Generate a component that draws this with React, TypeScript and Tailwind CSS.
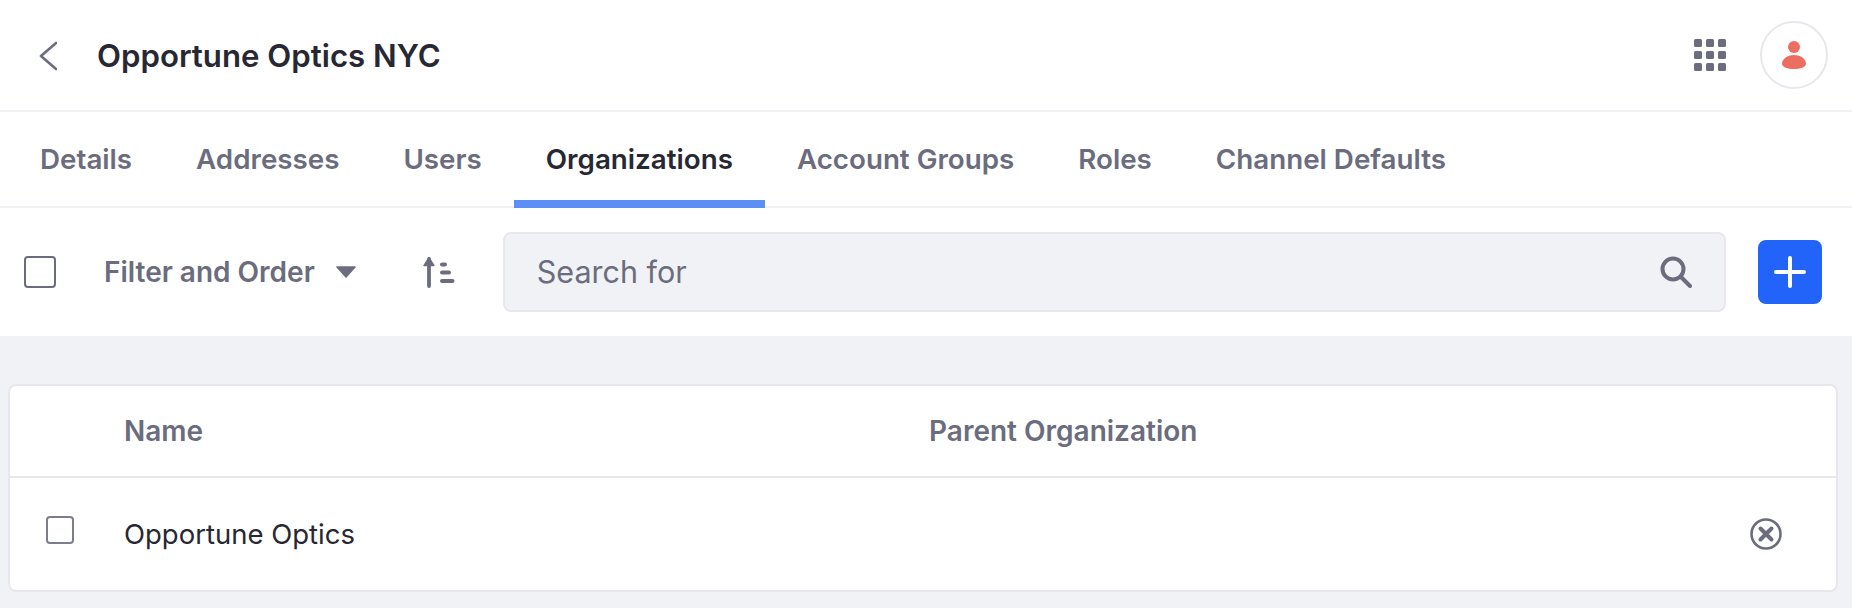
const tabs = ['Details', 'Addresses', 'Users', 'Organizations', 'Account Groups', 'Roles', 'Channel Defaults'];

function GridIcon() {
  return (
    <svg width="32" height="32" viewBox="0 0 32 32" fill="#6b6c7e">
      {[0, 12, 24].map((y) =>
        [0, 12, 24].map((x) => <rect key={`${x}-${y}`} x={x} y={y} width="8" height="8" rx="1.5" />),
      )}
    </svg>
  );
}

function UserIcon() {
  return (
    <svg width="24" height="28" viewBox="0 0 24 28" fill="#eb6e60">
      <circle cx="12" cy="6" r="6" />
      <path d="M12 14c7 0 12 4 12 9 0 3-6 5-12 5S0 26 0 23c0-5 5-9 12-9z" />
    </svg>
  );
}

function SortIcon() {
  return (
    <svg width="33" height="32" viewBox="0 0 33 32" fill="none" stroke="#6b6c7e" strokeLinecap="round">
      <path d="M7 30V3" strokeWidth="3.8" />
      <path d="M2 9.5l5-8 5 8z" fill="#6b6c7e" stroke="#6b6c7e" strokeWidth="1.4" strokeLinejoin="round" />
      <path d="M20 8.5h3" strokeWidth="4" />
      <path d="M20 16.5h7" strokeWidth="4" />
      <path d="M20 25h10.5" strokeWidth="4" />
    </svg>
  );
}

function SearchIcon() {
  return (
    <svg width="32" height="32" viewBox="0 0 32 32" fill="none" stroke="#6b6c7e" strokeWidth="4" strokeLinecap="round">
      <circle cx="13" cy="13" r="10.5" />
      <path d="M21 21l9 9" />
    </svg>
  );
}

function RemoveIcon() {
  return (
    <svg width="32" height="32" viewBox="0 0 32 32" fill="none" stroke="#6b6c7e" strokeLinecap="round">
      <circle cx="16" cy="16" r="14.5" strokeWidth="2.6" />
      <path d="M10.5 10.5l11 11M21.5 10.5l-11 11" strokeWidth="4" />
    </svg>
  );
}

export default function App() {
  return (
    <div className="h-[608px] overflow-hidden bg-[#f1f2f5] font-['Inter',sans-serif] text-[#6b6c7e]">
      <header className="flex h-[112px] items-center border-b-2 border-[#f1f2f5] bg-white pl-[39px] pr-[24px]">
        <svg className="mt-[2px]" width="18" height="30" viewBox="0 0 18 30" fill="none" stroke="#6b6c7e" strokeWidth="2.6" strokeLinecap="round" strokeLinejoin="round">
          <path d="M17 2L2 15l15 13" />
        </svg>
        <h1 className="ml-[40px] flex-1 pt-[2px] text-[31.2px] font-semibold text-[#272833]">Opportune Optics NYC</h1>
        <GridIcon />
        <div className="ml-[34px] flex size-[68px] items-center justify-center rounded-full border-2 border-[#e7e7ed] bg-white">
          <UserIcon />
        </div>
      </header>

      <nav className="flex h-[96px] border-b-2 border-[#f1f2f5] bg-white pl-2">
        {tabs.map((tab) => (
          <div
            key={tab}
            className={
              tab === 'Organizations'
                ? 'flex h-[96px] items-center border-b-8 border-[#5c8ff5] px-8 pt-[8px] text-[27.75px] font-semibold text-[#272833]'
                : 'flex h-[96px] items-center px-8 text-[27.75px] font-semibold text-[#6b6c7e]'
            }
          >
            {tab}
          </div>
        ))}
      </nav>

      <div className="flex h-[128px] items-center bg-white pl-[24px] pr-[30px]">
        <div className="size-[32px] rounded-[4px] border-2 border-[#6b6c7e] bg-white" />
        <span className="ml-[48px] text-[28px] font-semibold">Filter and Order</span>
        <svg className="ml-[21px]" width="20" height="12" viewBox="0 0 20 12" fill="#6b6c7e">
          <path d="M1 1h18l-9 10z" stroke="#6b6c7e" strokeWidth="1.5" strokeLinejoin="round" />
        </svg>
        <div className="ml-[66px]">
          <SortIcon />
        </div>
        <div className="ml-[48px] flex h-[80px] flex-1 items-center justify-between rounded-[8px] border-2 border-[#e7e7ed] bg-[#f1f2f5] pl-[32px] pr-[32px]">
          <span className="text-[30.5px] text-[#6b6c7e]">Search for</span>
          <SearchIcon />
        </div>
        <button className="ml-[32px] flex size-[64px] items-center justify-center rounded-[8px] bg-[#2264fa]">
          <svg width="32" height="32" viewBox="0 0 32 32" stroke="#fff" strokeWidth="4" strokeLinecap="round">
            <path d="M16 2v28M2 16h28" />
          </svg>
        </button>
      </div>

      <div className="pl-[8px] pr-[14px] pt-[48px]">
        <div className="rounded-[8px] border-2 border-[#e7e7ed] bg-white">
          <div className="flex h-[92px] items-center border-b-2 border-[#e7e7ed] text-[28px] font-semibold">
            <span className="ml-[114px] w-[805px]">Name</span>
            <span>Parent Organization</span>
          </div>
          <div className="flex h-[112px] items-center pl-[36px] pr-[54px]">
            <div className="size-[28px] -translate-y-[4px] rounded-[4px] border-2 border-[#7c7d8c] bg-white" />
            <span className="ml-[50px] flex-1 pt-[2px] text-[27.5px] text-[#272833]">Opportune Optics</span>
            <RemoveIcon />
          </div>
        </div>
      </div>
    </div>
  );
}
